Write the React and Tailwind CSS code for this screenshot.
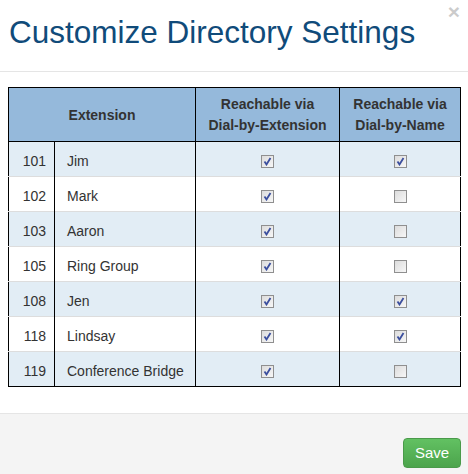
import React from 'react';

const rows = [
  { ext: '101', name: 'Jim', byExt: true, byName: true },
  { ext: '102', name: 'Mark', byExt: true, byName: false },
  { ext: '103', name: 'Aaron', byExt: true, byName: false },
  { ext: '105', name: 'Ring Group', byExt: true, byName: false },
  { ext: '108', name: 'Jen', byExt: true, byName: true },
  { ext: '118', name: 'Lindsay', byExt: true, byName: true },
  { ext: '119', name: 'Conference Bridge', byExt: true, byName: false },
];

const Check = ({ checked }) => (
  <span className="inline-flex h-[13px] w-[13px] items-center justify-center border border-[#8f8f8f] bg-gradient-to-br from-[#dcdcdc] to-[#f7f7f7] align-middle">
    {checked && (
      <svg width="9" height="9" viewBox="0 0 9 9">
        <path d="M1.5 4.5 L3.5 7.5 L7.5 1" fill="none" stroke="#3b4f9e" strokeWidth="1.8" />
      </svg>
    )}
  </span>
);

const App = () => {
  return (
    <div className="relative h-[474px] w-[468px] bg-white font-['Liberation_Sans',Arial,sans-serif] text-[#333]">
      <div className="relative h-[72px] border-b border-[#e5e5e5] px-[9px] pt-[14px]">
        <h4 className="text-[31.5px] leading-[36px] text-[#104b7a]">Customize Directory Settings</h4>
        <span className="absolute right-[8px] top-[1px] text-[21px] font-bold leading-[21px] text-black opacity-20">×</span>
      </div>

      <div className="h-[341px] px-[8px] pt-[15px]">
        <table className="w-[452px] table-fixed border-collapse border border-black text-[14px]">
          <colgroup>
            <col className="w-[46px]" />
            <col className="w-[141px]" />
            <col className="w-[144px]" />
            <col className="w-[121px]" />
          </colgroup>
          <thead>
            <tr className="h-[54px] bg-[#95b9db] font-bold">
              <th colSpan={2} className="border border-black pt-[1px] text-center font-bold">Extension</th>
              <th className="border border-black pt-[1px] text-center font-bold leading-[21px]">
                Reachable via<br />Dial-by-Extension
              </th>
              <th className="border border-black pt-[1px] text-center font-bold leading-[21px]">
                Reachable via<br />Dial-by-Name
              </th>
            </tr>
          </thead>
          <tbody>
            {rows.map((r, i) => (
              <tr key={r.ext} className={`h-[35px] border-t border-[#dddddd] ${i % 2 === 0 ? 'bg-[#e2edf5]' : 'bg-white'}`}>
                <td className="border-r border-black pr-[8px] pt-[4px] text-right">{r.ext}</td>
                <td className="border-r border-black pl-[12px] pt-[5px] text-left">{r.name}</td>
                <td className="border-r border-black pt-[3px] text-center">
                  <Check checked={r.byExt} />
                </td>
                <td className="pt-[3px] text-center">
                  <Check checked={r.byName} />
                </td>
              </tr>
            ))}
          </tbody>
        </table>
      </div>

      <div className="flex h-[61px] items-end justify-end border-t border-[#e5e5e5] bg-[#f4f4f4] px-[7px] pb-[6px]">
        <button className="h-[30px] w-[58px] rounded-[4px] border border-[#4a9a4a] bg-gradient-to-b from-[#62c162] to-[#4ca44c] text-[15px] text-white">
          Save
        </button>
      </div>
    </div>
  );
};

export default App;
